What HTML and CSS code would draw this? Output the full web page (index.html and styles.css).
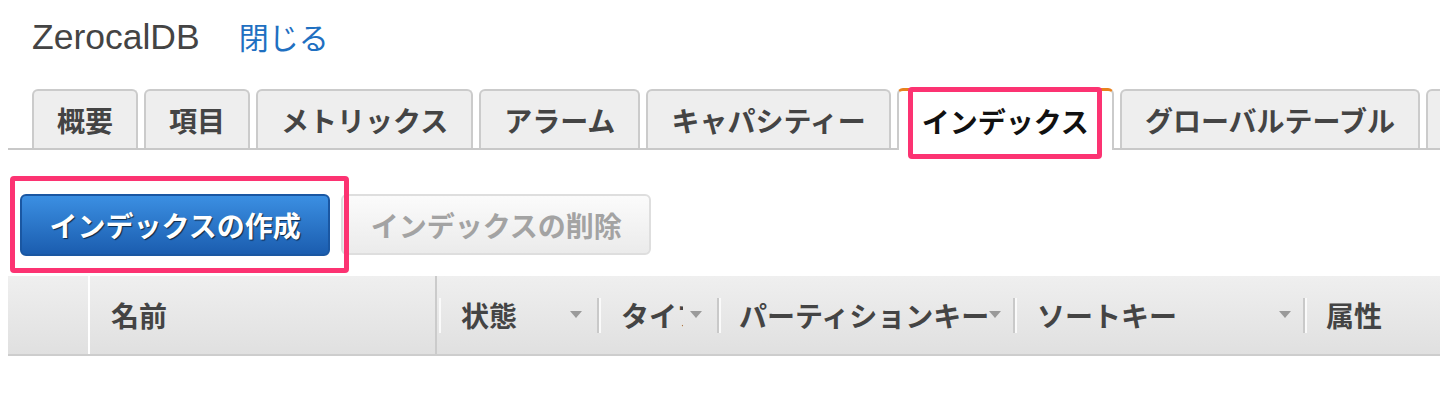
FILE: index.html
```html
<!DOCTYPE html>
<html lang="ja">
<head>
<meta charset="utf-8">
<title>ZerocalDB</title>
<link rel="stylesheet" href="styles.css">
</head>
<body>
<div class="page">
  <div class="title-row">
    <h1 class="title">ZerocalDB</h1>
    <a class="close-link" href="#">閉じる</a>
  </div>

  <div class="tabs">
    <div class="tab">概要</div>
    <div class="tab">項目</div>
    <div class="tab">メトリックス</div>
    <div class="tab">アラーム</div>
    <div class="tab">キャパシティー</div>
    <div class="tab active highlight-tab">インデックス</div>
    <div class="tab">グローバルテーブル</div>
    <div class="tab tab-stub"></div>
  </div>

  <div class="actions">
    <button class="btn btn-primary highlight-btn">インデックスの作成</button>
    <button class="btn btn-disabled">インデックスの削除</button>
  </div>

  <div class="grid-header">
    <div class="col col-check"></div>
    <div class="col col-name"><span class="label">名前</span></div>
    <div class="col col-status sortable first-sort"><span class="label">状態</span></div>
    <div class="col col-type sortable"><span class="label clip">タイプ</span></div>
    <div class="col col-pkey sortable"><span class="label">パーティションキー</span></div>
    <div class="col col-skey sortable"><span class="label">ソートキー</span></div>
    <div class="col col-attr sep"><span class="label">属性</span></div>
  </div>
</div>
</body>
</html>
```

FILE: styles.css
```css
html {
  overflow: hidden;
}

body {
  margin: 0;
  font-family: "Liberation Sans", "Noto Sans CJK JP", sans-serif;
  color: #444;
  background: #fff;
}

.page {
  padding: 8px 0 0 8px;
  overflow: hidden;
}

/* Title row */
.title-row {
  display: flex;
  align-items: baseline;
  gap: 39px;
  padding: 6px 0 0 24px;
  height: 41px;
}

.title {
  margin: 0;
  font-size: 35.5px;
  font-weight: normal;
  line-height: 40px;
  color: #444;
}

.close-link {
  font-family: "Noto Sans CJK JP", sans-serif;
  font-size: 30px;
  color: #1f70c1;
  text-decoration: none;
}

/* Tabs */
.tabs {
  display: flex;
  align-items: flex-end;
  gap: 6px;
  margin-top: 33px;
  padding-left: 24px;
  border-bottom: 2px solid #c8c8c8;
  white-space: nowrap;
}

.tab {
  flex: none;
  box-sizing: border-box;
  height: 59px;
  padding: 0 23px;
  border: 2px solid #cbcbcb;
  border-bottom: 0;
  border-radius: 6px 6px 0 0;
  background: #eeeeee;
  font-family: "Noto Sans CJK JP", sans-serif;
  font-weight: bold;
  font-size: 28px;
  line-height: 58px;
  color: #444;
}

.tab-stub {
  width: 120px;
}

.tab.active {
  position: relative;
  height: 62px;
  margin-bottom: -2px;
  background: #fff;
  border-top: 3px solid #e8821e;
  line-height: 60px;
  color: #111;
}

.highlight-tab::after {
  content: "";
  position: absolute;
  left: 9px;
  right: 10px;
  top: -4px;
  bottom: -9px;
  border: 5px solid #fc3372;
  border-radius: 4px;
}

/* Buttons */
.actions {
  display: flex;
  gap: 11px;
  margin-top: 44px;
  padding-left: 12px;
}

.btn {
  box-sizing: border-box;
  height: 62px;
  padding: 0 27.5px;
  border: 2px solid;
  border-radius: 6px;
  font-family: "Noto Sans CJK JP", sans-serif;
  font-weight: bold;
  font-size: 28px;
  line-height: 56px;
  white-space: nowrap;
}

.btn-primary {
  position: relative;
  background: linear-gradient(#3b8fe2, #1b5daf);
  border-color: #1a57a2;
  color: #fff;
  text-shadow: 1px 1px 1px rgba(0, 0, 0, 0.65);
}

.highlight-btn::after {
  content: "";
  position: absolute;
  left: -12px;
  right: -21px;
  top: -20px;
  bottom: -19px;
  border: 5px solid #fc3372;
  border-radius: 4px;
}

.btn-disabled {
  background: linear-gradient(#fbfbfb, #ebebeb);
  border-color: #dedede;
  color: #a3a3a3;
  height: 61px;
}

/* Grid header */
.grid-header {
  display: flex;
  box-sizing: border-box;
  height: 80px;
  margin-top: 20px;
  border-bottom: 2px solid #cdcdcd;
  background: linear-gradient(#efefef, #e0e0e0);
}

.col {
  position: relative;
  flex: none;
  box-sizing: border-box;
  display: flex;
  align-items: center;
  font-family: "Noto Sans CJK JP", sans-serif;
  font-weight: bold;
  font-size: 28px;
  color: #444;
  white-space: nowrap;
}

.col-check {
  width: 82px;
  border-right: 2px solid #fff;
}

.col-name {
  width: 347px;
  padding-left: 21px;
  border-right: 2px solid #cbcbcb;
}

.col-status {
  width: 160px;
  padding-left: 24px;
}

.col-type {
  width: 120px;
  padding-left: 24px;
}

.col-pkey {
  width: 296px;
  padding-left: 22px;
}

.col-skey {
  width: 290px;
  padding-left: 24px;
}

.col-attr {
  flex: 1;
  padding-left: 23px;
}

.label.clip {
  display: block;
  max-width: 62px;
  overflow: hidden;
}

/* short column separators */
.sortable::before,
.sep::before {
  content: "";
  position: absolute;
  left: 0;
  top: 22px;
  bottom: 21px;
  width: 2px;
  background: #c9c9c9;
  box-shadow: 2px 0 0 #fafafa;
}

.first-sort::before {
  left: 2px;
  background: #fafafa;
  box-shadow: none;
}

/* sort triangles */
.sortable::after {
  content: "";
  position: absolute;
  right: 15px;
  top: 50%;
  margin-top: -4px;
  border-left: 6px solid transparent;
  border-right: 6px solid transparent;
  border-top: 7px solid #9a9a9a;
}

.col-pkey::after,
.col-skey::after {
  right: 12px;
}
```
